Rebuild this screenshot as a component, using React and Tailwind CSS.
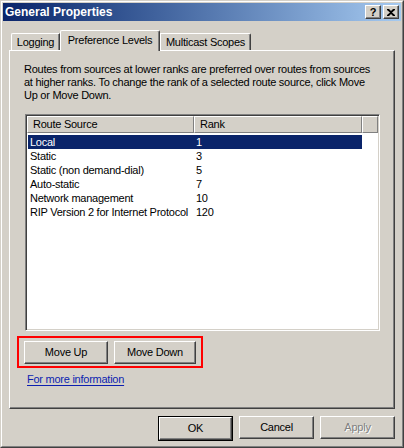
import React from "react";

const rows = [
  { source: "Local", rank: "1" },
  { source: "Static", rank: "3" },
  { source: "Static (non demand-dial)", rank: "5" },
  { source: "Auto-static", rank: "7" },
  { source: "Network management", rank: "10" },
  { source: "RIP Version 2 for Internet Protocol", rank: "120" },
];

const Button = ({ children, className = "", disabled }) => (
  <div
    className={`flex items-center justify-center h-[23px] bg-[#d4d0c8] border border-t-white border-l-white border-r-[#404040] border-b-[#404040] shadow-[inset_-1px_-1px_0_#808080] ${className}`}
  >
    <span
      className={
        disabled ? "text-[#808080] [text-shadow:1px_1px_0_#ffffff]" : "text-black"
      }
    >
      {children}
    </span>
  </div>
);

const HeaderCell = ({ children, className = "" }) => (
  <div
    className={`h-[17px] flex items-center pl-[5px] bg-[#d4d0c8] border border-t-white border-l-white border-r-[#808080] border-b-[#808080] ${className}`}
  >
    {children}
  </div>
);

export default function App() {
  return (
    <div
      className="w-[404px] h-[448px] bg-[#d4d0c8] border border-t-[#d4d0c8] border-l-[#d4d0c8] border-r-[#404040] border-b-[#404040] text-[11px] leading-[13px] tracking-[-0.25px] text-black"
      style={{ fontFamily: '"Liberation Sans", Arial, sans-serif' }}
    >
      <div className="h-full flex flex-col border border-t-white border-l-white border-r-[#808080] border-b-[#808080] p-px">
        {/* title bar */}
        <div className="h-[18px] flex items-center justify-between bg-linear-to-r from-[#0a246a] to-[#a6caf0] pl-[2px] pr-[2px]">
          <span className="text-white font-bold text-[12px] tracking-normal">General Properties</span>
          <div className="flex gap-[2px]">
            <div className="w-[16px] h-[14px] flex items-center justify-center bg-[#d4d0c8] border border-t-white border-l-white border-r-[#404040] border-b-[#404040] shadow-[inset_-1px_-1px_0_#808080] font-bold text-[11px] leading-none">
              ?
            </div>
            <div className="w-[16px] h-[14px] flex items-center justify-center bg-[#d4d0c8] border border-t-white border-l-white border-r-[#404040] border-b-[#404040] shadow-[inset_-1px_-1px_0_#808080]">
              <svg width="8" height="7" viewBox="0 0 8 7">
                <path d="M0 0h2l2 2 2-2h2v1L5 3.5 8 6v1H6L4 5 2 7H0V6l3-2.5L0 1z" fill="#000" />
              </svg>
            </div>
          </div>
        </div>

        {/* tabs */}
        <div className="flex items-end pl-[8px] mt-[8px] h-[21px]">
          <div className="w-[49px] h-[17px] flex items-center justify-center border border-b-0 border-t-white border-l-white border-r-[#404040] rounded-tl-[2px] shadow-[inset_-1px_0_0_#808080]">
            Logging
          </div>
          <div className="relative w-[100px] h-[21px] -mb-px flex items-start pt-[3px] justify-center bg-[#d4d0c8] border border-b-0 border-t-white border-l-white border-r-[#404040] rounded-t-[2px] shadow-[inset_-1px_0_0_#808080]">
            Preference Levels
          </div>
          <div className="w-[91px] h-[17px] flex items-center justify-center border border-b-0 border-t-white border-l-white border-r-[#404040] rounded-tr-[2px] shadow-[inset_-1px_0_0_#808080]">
            Multicast Scopes
          </div>
        </div>

        {/* panel */}
        <div className="ml-[6px] w-[386px] h-[359px] border border-t-white border-l-white border-r-[#404040] border-b-[#404040] shadow-[inset_-1px_-1px_0_#808080] flex flex-col">
          <p className="ml-[14px] mt-[12px] whitespace-nowrap">
            Routes from sources at lower ranks are preferred over routes from sources
            <br />
            at higher ranks. To change the rank of a selected route source, click Move
            <br />
            Up or Move Down.
          </p>

          <div className="ml-[15px] mt-[12px] w-[355px] h-[217px] bg-white border border-t-[#808080] border-l-[#808080] border-r-white border-b-white shadow-[inset_1px_1px_0_#404040,inset_-1px_-1px_0_#d4d0c8] p-px flex flex-col">
            <div className="flex">
              <HeaderCell className="w-[167px]">Route Source</HeaderCell>
              <HeaderCell className="w-[168px]">Rank</HeaderCell>
              <HeaderCell className="flex-1" />
            </div>
            <div className="pt-[2px] pl-px">
              {rows.map((r, i) => (
                <div
                  key={r.source}
                  className={`flex h-[14px] items-center w-[334px] ${
                    i === 0 ? "bg-[#0a246a] text-white" : ""
                  }`}
                >
                  <span className="w-[166px] pl-[2px] whitespace-nowrap">{r.source}</span>
                  <span className="pl-[2px]">{r.rank}</span>
                </div>
              ))}
            </div>
          </div>

          <div className="ml-[7px] mt-[5px] w-[186px] border-2 border-[#ff0000] pt-[3px] pb-[2px] pl-[5px] flex gap-[6px]">
            <Button className="w-[84px]">Move Up</Button>
            <Button className="w-[82px]">Move Down</Button>
          </div>

          <a className="ml-[17px] mt-[5px] text-[#0c1fb0] underline underline-offset-2 w-fit">
            For more information
          </a>
        </div>

        {/* footer buttons */}
        <div className="flex gap-[6px] justify-end pr-[6px] mt-[7px]">
          <div className="w-[75px] border border-black">
            <Button className="w-full h-[21px]">OK</Button>
          </div>
          <Button className="w-[75px]">Cancel</Button>
          <Button className="w-[75px]" disabled>
            Apply
          </Button>
        </div>
      </div>
    </div>
  );
}
